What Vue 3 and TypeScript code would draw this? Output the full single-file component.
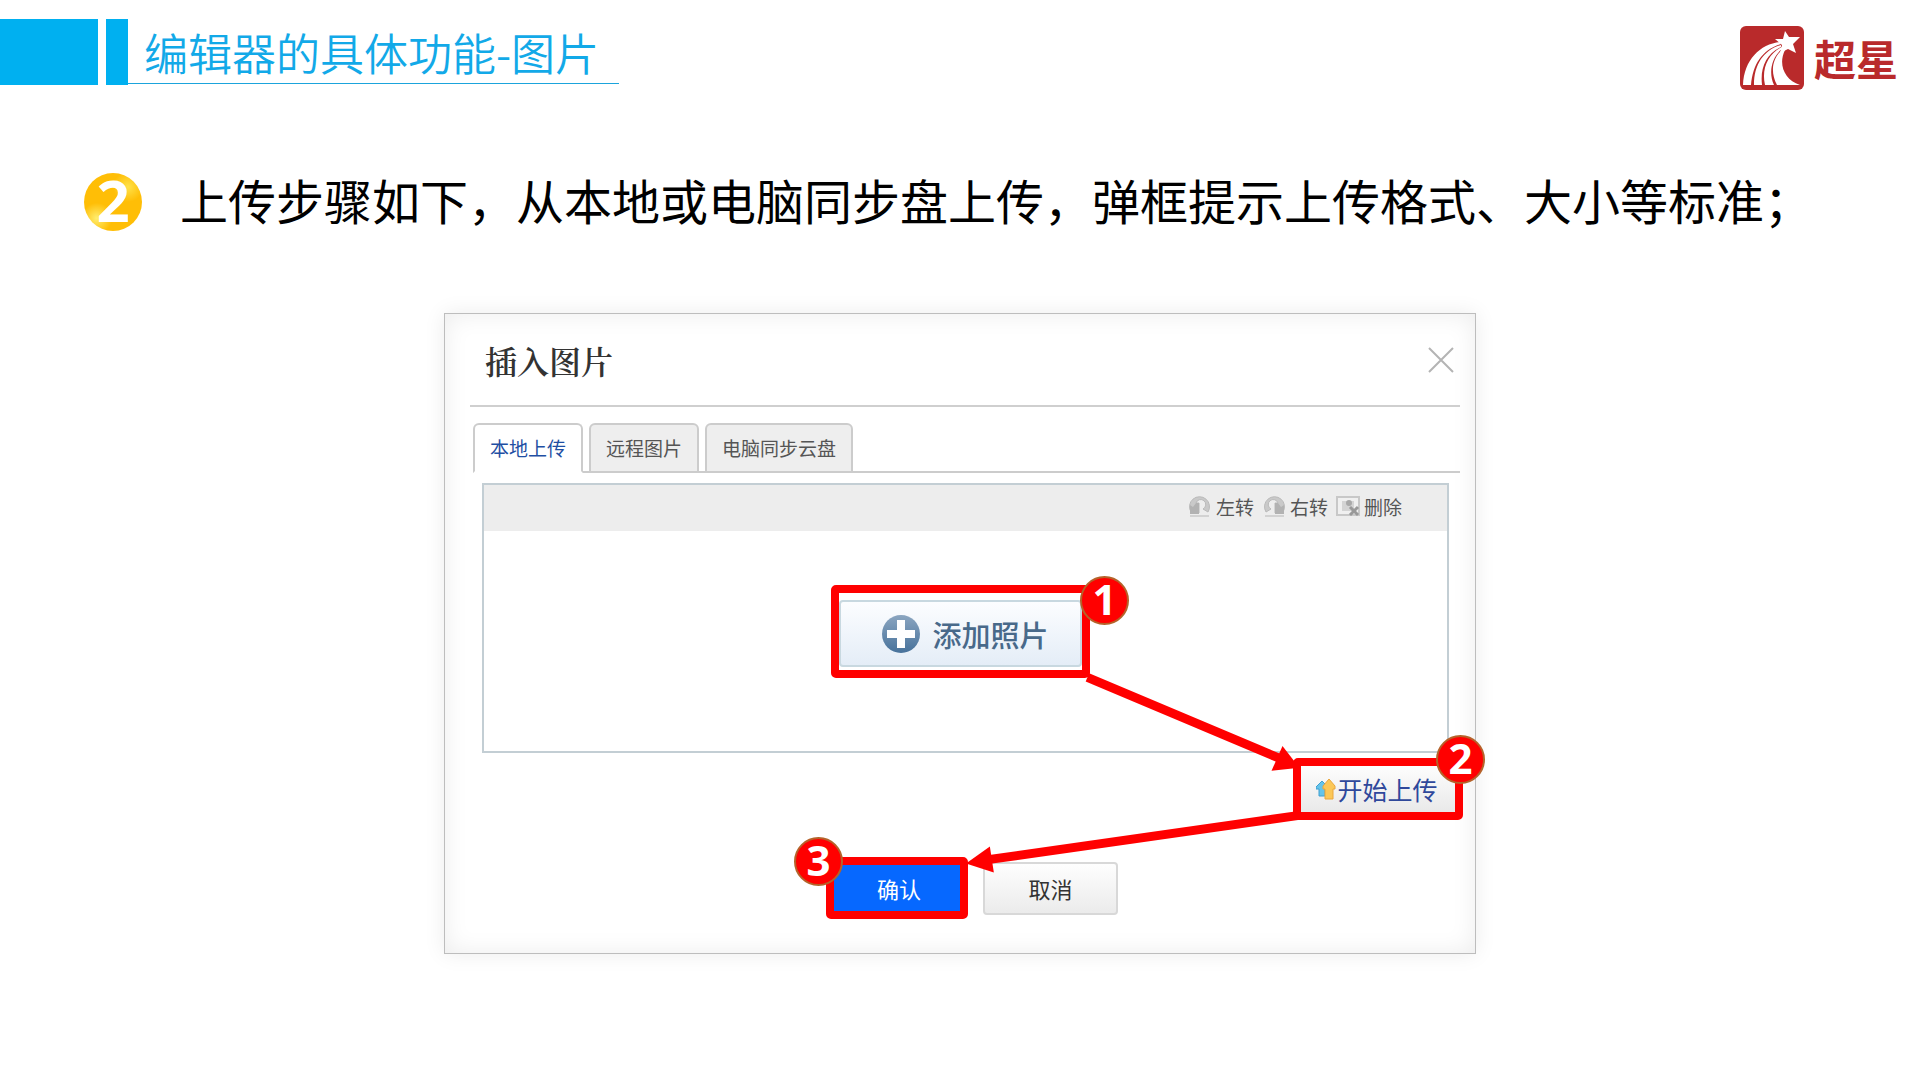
<script setup lang="ts">
import { ref } from 'vue'

const tabs = ['本地上传', '远程图片', '电脑同步云盘']
const activeTab = ref(0)
</script>

<template>
  <div class="slide">
    <header class="header">
      <span class="block wide"></span>
      <span class="block narrow"></span>
      <h1>编辑器的具体功能-图片</h1>
      <div class="brand">
        <svg class="brand-mark" viewBox="0 0 64 64" aria-hidden="true">
          <rect width="64" height="64" rx="6" fill="#b92a2b" />
          <g fill="#fff">
            <path d="M45 5 L49 11 L60 11 L53 18 L56 27 L48 23 L40 27 L42 19 L35 13 L43 13 Z" />
            <path d="M40 16 C20 18 4 34 3 59 L11 59 C13 38 22 24 41 18 Z" />
            <path d="M41 19 C24 24 14 38 14 59 L22 59 C20 42 26 28 41 21 Z" />
            <path d="M42 21 C29 27 21 42 25 59 L34 59 C28 46 32 31 42 23 Z" />
            <path d="M43 23 C32 32 30 46 37 59 L60 59 C44 54 38 38 45 24 Z" />
          </g>
        </svg>
        <span class="brand-name">超星</span>
      </div>
    </header>

    <main>
      <div class="step">
        <span class="step-number">2</span>
        <p>上传步骤如下，从本地或电脑同步盘上传，弹框提示上传格式、大小等标准；</p>
      </div>

      <section class="dialog" aria-labelledby="dialog-title">
        <div class="dialog-head">
          <h2 id="dialog-title">插入图片</h2>
          <button class="close" type="button" aria-label="关闭">
            <svg viewBox="0 0 28 28"><path d="M2 2 L26 26 M26 2 L2 26" stroke="#b4b4b4" stroke-width="2" fill="none" /></svg>
          </button>
        </div>

        <div class="tabs" role="tablist">
          <button
            v-for="(tab, i) in tabs"
            :key="tab"
            type="button"
            role="tab"
            :aria-selected="activeTab === i"
            :class="['tab', { active: activeTab === i }]"
            @click="activeTab = i"
          >{{ tab }}</button>
        </div>

        <div class="panel">
          <div class="toolbar">
            <button type="button">
              <svg viewBox="0 0 24 24">
                <path d="M3 18 A10 10 0 1 1 20 18 L15 15 A5 5 0 1 0 8 9 L11 9 V19 Z" fill="#c9c9c9" stroke="#bababa" />
                <path d="M2 20 V11 L5 13 L8 9 H11 V20 Z" fill="#b2b2b2" />
                <path d="M2 22 H21" stroke="#d2d2d2" stroke-width="2" />
              </svg>左转
            </button>
            <button type="button">
              <svg viewBox="0 0 24 24">
                <path d="M21 18 A10 10 0 1 0 4 18 L9 15 A5 5 0 1 1 16 9 L13 9 V19 Z" fill="#c9c9c9" stroke="#bababa" />
                <path d="M22 20 V11 L19 13 L16 9 H13 V20 Z" fill="#b2b2b2" />
                <path d="M3 22 H22" stroke="#d2d2d2" stroke-width="2" />
              </svg>右转
            </button>
            <button type="button">
              <svg viewBox="0 0 24 24">
                <rect x="1" y="3" width="22" height="18" fill="#f0f0f0" stroke="#c8c8c8" stroke-width="2" />
                <rect x="6" y="7" width="12" height="10" fill="#d4d4d4" />
                <circle cx="13" cy="9" r="3" fill="#a9a9a9" />
                <path d="M14 13 L22 21 M22 13 L14 21" stroke="#999" stroke-width="3" />
              </svg>删除
            </button>
          </div>
          <div class="drop-area">
            <div class="mark mark-add">
              <button class="add" type="button">
                <svg viewBox="0 0 40 40">
                  <defs>
                    <linearGradient id="plus-fill" x1="0" y1="0" x2="0" y2="1">
                      <stop offset="0" stop-color="#8ba5c0" />
                      <stop offset="1" stop-color="#47729b" />
                    </linearGradient>
                  </defs>
                  <circle cx="20" cy="20" r="19" fill="url(#plus-fill)" />
                  <path d="M16 6 H24 V16 H34 V24 H24 V34 H16 V24 H6 V16 H16 Z" fill="#fff" />
                </svg>
                添加照片
              </button>
              <span class="badge">1</span>
            </div>
          </div>
        </div>

        <div class="upload-row">
          <div class="mark mark-upload">
            <button class="upload" type="button">
              <svg viewBox="0 0 20 22">
                <path d="M6 3 L12 9 V11 H9 V18 H3 V11 H0 V9 Z" fill="#64c4ea" stroke="#3e9ed0" />
                <path d="M13 1 L19 8 V11 H17 V21 H9 V11 H7 V8 Z" fill="#fbc757" stroke="#eaa63c" />
              </svg>开始上传
            </button>
            <span class="badge">2</span>
          </div>
        </div>

        <div class="actions">
          <div class="mark mark-confirm">
            <button class="confirm" type="button">确认</button>
            <span class="badge">3</span>
          </div>
          <button class="cancel" type="button">取消</button>
        </div>

        <svg class="arrows" viewBox="0 0 1032 642" aria-hidden="true">
          <g stroke="#f00" stroke-width="9" fill="#f00">
            <path d="M644 365 L836 446" />
            <path d="M855 504 L546 548" />
          </g>
          <g fill="#f00">
            <path d="M857 456 L840 434 L829 459 Z" />
            <path d="M522 552 L546 535 L550 561 Z" />
          </g>
        </svg>
      </section>
    </main>
  </div>
</template>

<style>
body {
  margin: 0;
  background: #fff;
}
</style>

<style scoped>
* {
  box-sizing: border-box;
}

.slide {
  font-family: 'Noto Sans CJK SC', sans-serif;
  color: #000;
  min-height: 100vh;
  overflow: hidden;
}

h1,
h2,
p {
  margin: 0;
  font-weight: 400;
}

button {
  font-family: inherit;
  padding: 0;
  border: 0;
  background: none;
  display: flex;
  align-items: center;
  justify-content: center;
  white-space: nowrap;
}

.header {
  display: flex;
  align-items: flex-start;
  padding-top: 19px;
}

.block {
  height: 66px;
  background: #00b0f0;
}

.wide {
  width: 98px;
  margin-right: 8px;
}

.narrow {
  width: 22px;
}

h1 {
  height: 65px;
  padding: 0 20px 0 16px;
  border-bottom: 1px solid #1ba4dc;
  font-size: 44px;
  line-height: 66px;
  font-weight: 350;
  color: #12a9e8;
}

.brand {
  display: flex;
  align-items: center;
  gap: 10px;
  margin: 7px 22px 0 auto;
  color: #b92a2b;
}

.brand-mark {
  width: 64px;
  height: 64px;
}

.brand-name {
  font-size: 42px;
  line-height: 64px;
  font-weight: 700;
}

.step {
  display: flex;
  align-items: center;
  gap: 38px;
  height: 58px;
  margin: 83px 84px 0;
}

.step-number {
  flex: none;
  width: 58px;
  height: 58px;
  border-radius: 50%;
  background:
    radial-gradient(circle at 22% 78%, #ffee70 0, transparent 24%),
    radial-gradient(circle at 76% 24%, #ffe24a 0, transparent 24%),
    #ffbe06;
  color: #fff;
  font: 700 58px/54px 'Noto Sans', sans-serif;
  text-align: center;
}

.step p {
  padding-bottom: 6px;
  font-size: 48px;
  line-height: 60px;
  white-space: nowrap;
}

.dialog {
  position: relative;
  width: 1032px;
  max-width: 100%;
  margin: 82px auto 0;
  padding: 0 15px 34px 25px;
  border: 1px solid #bdbdbd;
  box-shadow:
    0 0 20px #ececec,
    inset 0 0 24px #ececec;
}

.dialog-head {
  display: flex;
  justify-content: space-between;
  align-items: center;
  height: 93px;
  padding: 0 5px 0 15px;
  border-bottom: 2px solid #cfcfcf;
}

h2 {
  font-family: 'Noto Serif CJK SC', 'Noto Sans CJK SC', serif;
  font-size: 32px;
  font-weight: 600;
  color: #333;
}

.close svg {
  width: 28px;
  height: 28px;
}

.tabs {
  display: flex;
  gap: 6px;
  margin: 16px 0 0 3px;
  border-bottom: 2px solid #ccc;
}

.tab {
  height: 50px;
  padding: 0 15px 2px;
  margin-bottom: -2px;
  border: 2px solid #ccc;
  border-radius: 6px 6px 0 0;
  background: #eee;
  font-size: 19px;
  color: #555;
}

.tab.active {
  border-bottom-color: #fff;
  background: #fff;
  color: #1f4fa3;
}

.panel {
  margin: 10px 11px 0 12px;
  border: 2px solid #c3ced4;
}

.toolbar {
  display: flex;
  justify-content: flex-end;
  gap: 8px;
  height: 46px;
  padding: 0 45px 4px 0;
  background: #ededed;
}

.toolbar button {
  gap: 4px;
  font-size: 19px;
  color: #555;
}

.toolbar svg {
  width: 24px;
  height: 24px;
}

.drop-area {
  display: flex;
  justify-content: center;
  align-items: flex-start;
  height: 220px;
  padding: 54px 10px 0 0;
}

.mark {
  position: relative;
  border: 8px solid #f00;
  border-radius: 5px;
  background: #fff;
}

.badge {
  position: absolute;
  width: 49px;
  height: 49px;
  border: 2px solid #b5622a;
  border-radius: 50%;
  background: #f00;
  color: #fff;
  font: 700 42px/42px 'Noto Sans', sans-serif;
  text-align: center;
  z-index: 2;
}

.mark-add {
  width: 259px;
  height: 93px;
  padding-top: 7px;
}

.mark-add .badge {
  top: -17px;
  right: -47px;
}

.add {
  width: 100%;
  height: 67px;
  gap: 11px;
  padding-left: 9px;
  border: 2px solid #c8d8e0;
  border-radius: 4px;
  background: linear-gradient(#fcfdff, #e4edf7);
  font-size: 29px;
  font-weight: 500;
  color: #48698a;
}

.add svg {
  width: 40px;
  height: 40px;
}

.upload-row {
  display: flex;
  justify-content: flex-end;
  margin-top: 5px;
}

.mark-upload {
  width: 170px;
  height: 62px;
  margin-right: -3px;
}

.mark-upload .badge {
  top: -31px;
  right: -30px;
}

.upload {
  width: 100%;
  height: 100%;
  gap: 1px;
  padding-right: 2px;
  background: linear-gradient(#fdfdfd, #e9e9e9);
  font-size: 25px;
  color: #2f489b;
}

.upload svg {
  width: 20px;
  height: 22px;
}

.actions {
  display: flex;
  align-items: center;
  gap: 15px;
  margin: 37px 0 0 356px;
}

.mark-confirm {
  width: 142px;
  height: 62px;
}

.mark-confirm .badge {
  top: -28px;
  left: -40px;
}

.confirm {
  width: 100%;
  height: 100%;
  padding-left: 4px;
  background: #0668ff;
  font-size: 22px;
  color: #fff;
}

.cancel {
  width: 135px;
  height: 53px;
  border: 2px solid #d8d8d8;
  border-radius: 4px;
  background: linear-gradient(#fefefe, #ebebeb);
  font-size: 22px;
  color: #333;
}

.arrows {
  position: absolute;
  inset: 0;
  width: 100%;
  height: 100%;
  pointer-events: none;
}
</style>
